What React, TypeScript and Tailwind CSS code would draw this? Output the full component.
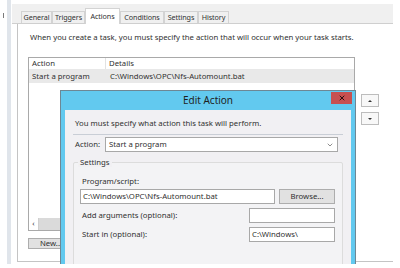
import { ChevronDown, X } from 'lucide-react'
import clsx from 'clsx'

const TABS = [
  { label: 'General', w: 'w-[31px]' },
  { label: 'Triggers', w: 'w-[33px]' },
  { label: 'Actions', w: 'w-[35px]', active: true },
  { label: 'Conditions', w: 'w-[44px]' },
  { label: 'Settings', w: 'w-[34px]' },
  { label: 'History', w: 'w-[31px]' },
]

function Tab({ label, w, active }: { label: string; w: string; active?: boolean }) {
  return (
    <div
      className={clsx(
        'flex items-center justify-center border border-b-0 border-[#d3d3d3] leading-none text-[7.2px] tracking-[-0.1px]',
        w,
        active ? 'h-[16px] -mb-px bg-white z-10' : 'h-[12px] bg-[#f0f0f0]'
      )}
    >
      {label}
    </div>
  )
}

function TextBox({ value, className }: { value?: string; className: string }) {
  return (
    <div className={clsx('h-[15px] border border-[#a8a8a8] bg-white pl-[2px] flex items-center leading-none', className)}>
      {value}
    </div>
  )
}

function EditActionDialog() {
  return (
    <div className="absolute left-[60px] top-[90px] w-[296px] h-[190px] bg-[#62c9ef] border border-[#6d8795] flex flex-col">
      {/* title bar */}
      <div className="relative h-[19px] shrink-0 flex items-center justify-center text-[10px] text-[#1f1f1f]">
        Edit Action
        <div className="absolute right-[3px] top-[1px] w-[21px] h-[12px] bg-[#c75050] flex items-center justify-center">
          <X size={8} strokeWidth={3} className="text-[#2a1010]" />
        </div>
      </div>

      {/* client */}
      <div className="mx-[4px] flex-1 bg-[#f1f0f3] flex flex-col">
        <div className="pl-[10px] pt-[8px] h-[18px] leading-[10px]">You must specify what action this task will perform.</div>
        <div className="mx-[8px] mt-[6px] h-px bg-[#c9ced6]" />

        <div className="mt-[2px] pl-[10px] flex items-center">
          <div className="w-[30px]">Action:</div>
          <div className="w-[233px] h-[15px] border border-[#a8a8a8] bg-white flex items-center justify-between pl-[3px] pr-[3px] leading-none">
            Start a program
            <ChevronDown size={8} strokeWidth={2} className="text-[#555]" />
          </div>
        </div>

        <div className="relative mx-[8px] mt-[10px] flex-1 border border-[#dcdcdc] rounded-[2px] bg-[#f3f3f5] pl-[6px] pt-[13px]">
          <div className="absolute -top-[6px] left-[4px] px-[2px] bg-[#f1f0f3] leading-[10px]">Settings</div>

          <div className="pl-[2px] leading-[10px]">Program/script:</div>
          <div className="mt-[3px] flex items-center gap-[4px]">
            <TextBox value="C:\Windows\OPC\Nfs-Automount.bat" className="w-[195px]" />
            <div className="w-[56px] h-[15px] border border-[#adadad] bg-[#e1e1e1] flex items-center justify-center leading-none">
              Browse...
            </div>
          </div>

          <div className="mt-[4px] flex items-center justify-between pr-[7px]">
            <div className="pl-[2px]">Add arguments (optional):</div>
            <TextBox className="w-[86px]" />
          </div>
          <div className="mt-[4px] flex items-center justify-between pr-[7px]">
            <div className="pl-[2px]">Start in (optional):</div>
            <TextBox value="C:\Windows\" className="w-[86px]" />
          </div>
        </div>
      </div>
    </div>
  )
}

export default function App() {
  return (
    <div className="relative w-[400px] h-[268px] overflow-hidden bg-white text-[7.75px] text-[#303030] font-['Noto_Sans','Open_Sans',sans-serif]">
      <div className="relative h-[264px] overflow-hidden flex">
        {/* left edge of the screen behind */}
        <div className="w-[7px] pt-[13px] pl-[3px]">
          <div className="w-px h-[5px] bg-[#7a7a7a]" />
        </div>
        <div className="w-[4px] bg-[#e0e5eb]" />
        <div className="w-px" />

        {/* Task properties window */}
        <div className="w-[381px] pt-[4px] flex flex-col">
          <div className="h-[20px] bg-[#f0f0f0] border-b border-[#cfcfcf] flex items-end pl-[9px]">
            {TABS.map((t) => (
              <Tab key={t.label} {...t} />
            ))}
          </div>

          <div className="ml-[5px] h-[238px] border-l border-b border-[#c4c4c4] bg-white flex flex-col">
            <div className="pl-[12px] pt-[8px] leading-[10px]">
              When you create a task, you must specify the action that will occur when your task starts.
            </div>

            <div className="mt-[15px] pl-[10px] flex">
              <div className="w-[327px] h-[174px] border border-[#a9a9a9] flex flex-col">
                <div className="h-[12px] flex items-center border-b border-[#e8e8e8] leading-none">
                  <div className="w-[77px] h-full pl-[3px] flex items-center border-r border-[#e2e2e2]">Action</div>
                  <div className="pl-[3px]">Details</div>
                </div>
                <div className="h-[13px] bg-[#e9e9e9] flex items-center leading-none">
                  <div className="w-[77px] pl-[3px]">Start a program</div>
                  <div className="pl-[4px]">C:\Windows\OPC\Nfs-Automount.bat</div>
                </div>
                <div className="flex-1" />
                <div className="h-[12px] bg-[#e8e8e8] flex">
                  <div className="w-[10px] bg-white border-r border-[#cfcfcf] flex items-center justify-center text-[#444] leading-none">
                    ‹
                  </div>
                  <div className="w-[40px] bg-[#dadada]" />
                </div>
              </div>

              <div className="ml-[6px] mt-[37px] flex flex-col gap-[5px]">
                <div className="w-[18px] h-[13px] border border-[#bdbdbd] bg-[#f8f8f8] flex items-center justify-center">
                  <div className="w-0 h-0 border-l-[2px] border-r-[2px] border-b-[2px] border-l-transparent border-r-transparent border-b-[#333]" />
                </div>
                <div className="w-[18px] h-[13px] border border-[#bdbdbd] bg-[#f8f8f8] flex items-center justify-center">
                  <div className="w-0 h-0 border-l-[2px] border-r-[2px] border-t-[2px] border-l-transparent border-r-transparent border-t-[#333]" />
                </div>
              </div>
            </div>

            <div className="mt-[7px] ml-[10px] w-[46px] h-[11px] border border-[#adadad] bg-[#e1e1e1] flex items-center justify-center leading-none">
              New...
            </div>
          </div>
        </div>

        <EditActionDialog />
      </div>
    </div>
  )
}
